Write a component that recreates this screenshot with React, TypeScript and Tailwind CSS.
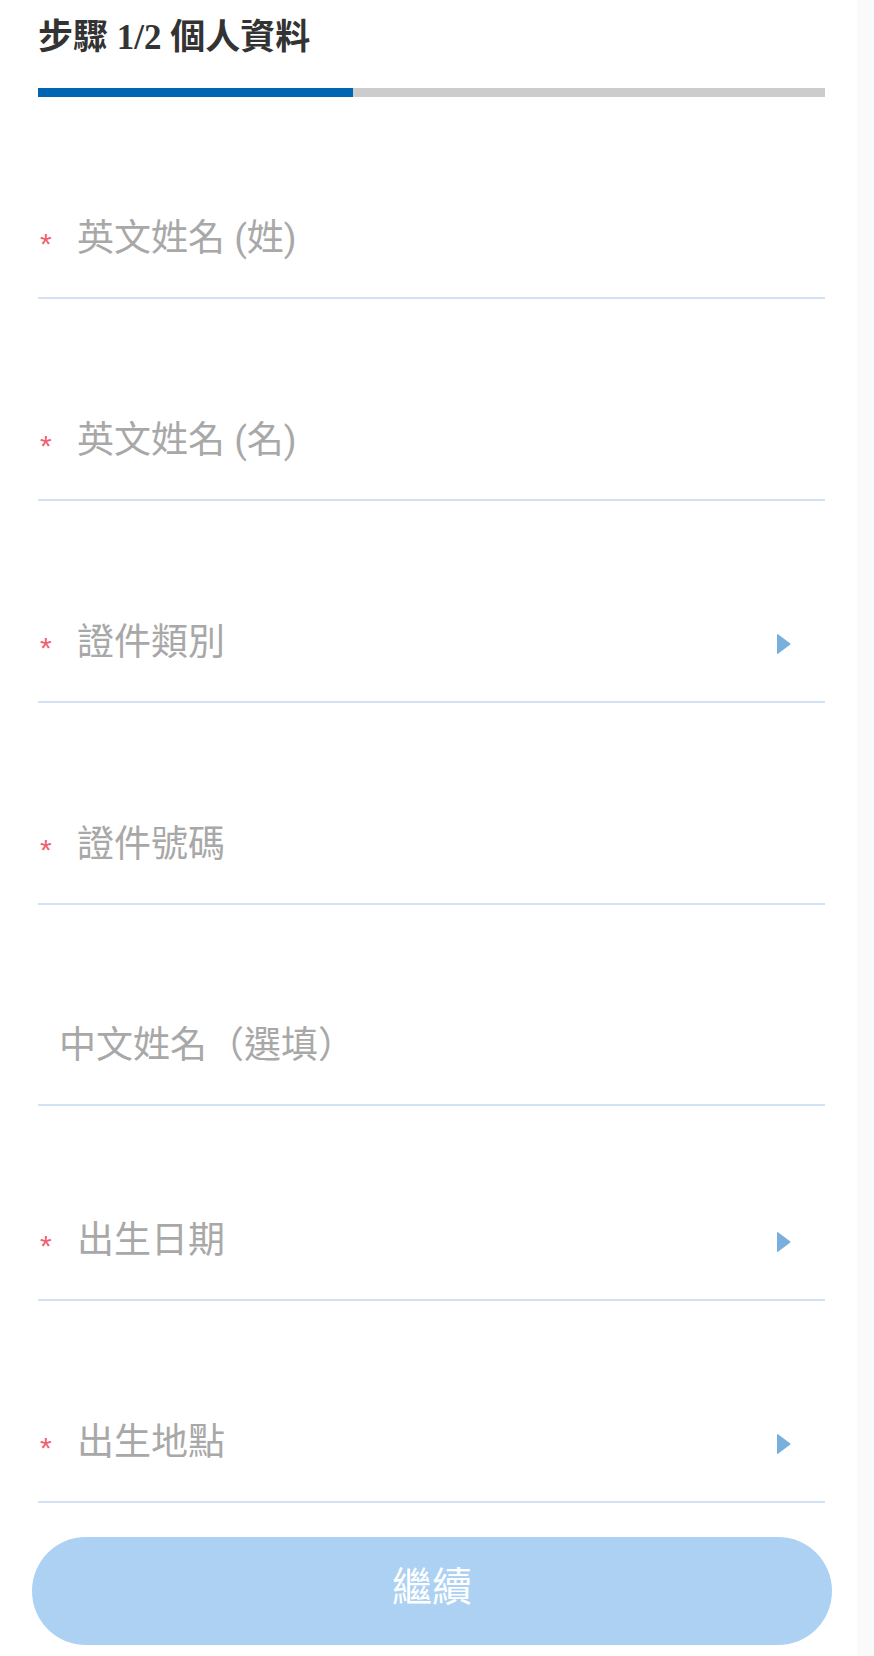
import React from 'react';

type Field = { label: string; required: boolean; picker?: boolean; pt: string };

const fields: Field[] = [
  { label: '英文姓名 (姓)', required: true, pt: 'pt-[114px]' },
  { label: '英文姓名 (名)', required: true, pt: 'pt-[114px]' },
  { label: '證件類別', required: true, picker: true, pt: 'pt-[114px]' },
  { label: '證件號碼', required: true, pt: 'pt-[114px]' },
  { label: '中文姓名（選填）', required: false, pt: 'pt-[113px]' },
  { label: '出生日期', required: true, picker: true, pt: 'pt-[107px]' },
  { label: '出生地點', required: true, picker: true, pt: 'pt-[114px]' },
];

function Arrow() {
  return (
    <svg width="15" height="22" viewBox="0 0 15 22" className="ml-auto mt-[9px] shrink-0">
      <path d="M1 1.5 Q1 0.5 2 1.2 L14 10.2 Q15 11 14 11.8 L2 20.8 Q1 21.5 1 20.5 Z" fill="#78afdc" />
    </svg>
  );
}

function FormField({ field }: { field: Field }) {
  return (
    <div className={`${field.pt} pb-[38px] border-b-2 border-[#d3e2f2]`}>
      <div className="flex items-center h-[48px] pr-[34px]">
        {field.required ? (
          <span className="w-[39px] pl-[2px] text-[30px] leading-none pt-[18px] text-[#f2606e] font-['Liberation_Sans',sans-serif]">*</span>
        ) : (
          <span className="w-[21px]" />
        )}
        <span className="pt-[7px] text-[37px] leading-[48px] text-[#a8a8a8] font-['Roboto','Noto_Sans_CJK_TC',sans-serif]">{field.label}</span>
        {field.picker && <Arrow />}
      </div>
    </div>
  );
}

export default function App() {
  return (
    <div className="min-h-[1656px] bg-white flex">
      <div className="flex-1">
        <div className="pl-[38px] pr-[32px]">
          <h1 className="pt-[14px] mb-[26px] text-[35px] leading-[48px] font-bold text-[#333333] font-['Liberation_Serif','Noto_Sans_CJK_TC',serif]">
            步驟 1/2 個人資料
          </h1>
          <div className="flex h-[9px] bg-[#cccccc]">
            <div className="w-[40%] bg-[#0066b3]" />
          </div>
          {fields.map(f => (
            <FormField key={f.label} field={f} />
          ))}
        </div>
        <div className="pl-[32px] pr-[25px] pt-[34px]">
          <button className="w-full h-[108px] rounded-full bg-[#acd1f2] text-white text-[40px] leading-none pb-[14px] flex items-center justify-center font-['Noto_Sans_CJK_TC',sans-serif]">
            繼續
          </button>
        </div>
      </div>
      <div className="w-[17px] bg-[#fafafa]" />
    </div>
  );
}
